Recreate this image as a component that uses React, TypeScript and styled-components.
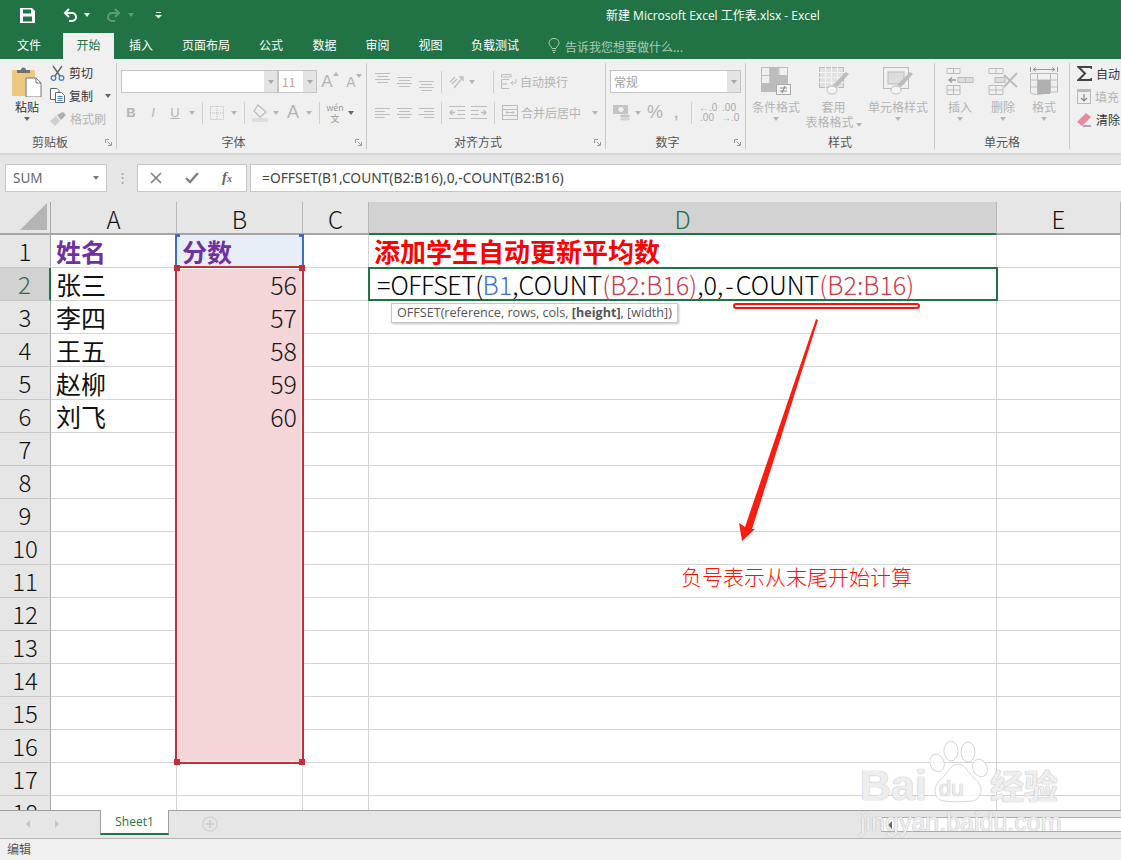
import React from "react";
import styled, { createGlobalStyle } from "styled-components";

const UI_FONT = `"Noto Sans CJK SC", "Noto Sans", sans-serif`;
const LATIN_FONT = `"Open Sans", "Noto Sans CJK SC", sans-serif`;
const GREEN = "#217346";
const DIM = "#b4b4b4";
const INK = "#444444";

const COLUMNS = [
  { name: "A", width: 126 },
  { name: "B", width: 126 },
  { name: "C", width: 66 },
  { name: "D", width: 628 },
  { name: "E", width: 124 },
];

const NAMES: Record<number, string> = { 2: "张三", 3: "李四", 4: "王五", 5: "赵柳", 6: "刘飞" };
const SCORES: Record<number, number> = { 2: 56, 3: 57, 4: 58, 5: 59, 6: 60 };
const TABS = [
  { label: "插入", width: 54 },
  { label: "页面布局", width: 76 },
  { label: "公式", width: 54 },
  { label: "数据", width: 53 },
  { label: "审阅", width: 53 },
  { label: "视图", width: 53 },
  { label: "负载测试", width: 76 },
];

export default function App() {
  return (
    <Window>
      <GlobalStyle />
      <TitleBar>
        <QuickAccess>
          <SaveIcon />
          <UndoIcon color="#ffffff" />
          <Caret $color="#ffffff" $gap={6} />
          <RedoIcon />
          <Caret $color="#5f9a7d" $gap={7} />
          <CustomizeIcon />
        </QuickAccess>
        <DocTitle>新建 Microsoft Excel 工作表.xlsx - Excel</DocTitle>
      </TitleBar>

      <TabRow>
        <Tab $width={58} $after={5}>文件</Tab>
        <Tab $width={51} $active>开始</Tab>
        {TABS.map((tab) => (
          <Tab key={tab.label} $width={tab.width}>{tab.label}</Tab>
        ))}
        <TellMe>
          <BulbIcon />
          告诉我您想要做什么...
        </TellMe>
      </TabRow>

      <Ribbon>
        <Group $width={117}>
          <ClipboardBody>
            <BigButton $width={40}>
              <BigIcon><PasteIcon /></BigIcon>
              <BigLabel $active>粘贴</BigLabel>
              <Caret $color="#666666" $top={3} />
            </BigButton>
            <SmallList>
              <SmallItem $active><ScissorsIcon />剪切</SmallItem>
              <SmallItem $active><CopyIcon />复制<Caret $color="#666666" $gap={8} /></SmallItem>
              <SmallItem><BrushIcon />格式刷</SmallItem>
            </SmallList>
          </ClipboardBody>
          <GroupLabel $launcher>剪贴板</GroupLabel>
          <Launcher />
        </Group>

        <Group $width={250}>
          <StackBody>
            <ToolRow>
              <Combo $width={157}><ComboArrow><Caret $color="#a8a8a8" /></ComboArrow></Combo>
              <Combo $width={39}>
                <ComboText $color="#c9a27a">11</ComboText>
                <ComboArrow><Caret $color="#a8a8a8" /></ComboArrow>
              </Combo>
              <GrowLetter $size={17}>A<Caret $color={DIM} $up /></GrowLetter>
              <GrowLetter $size={14}>A<Caret $color={DIM} /></GrowLetter>
            </ToolRow>
            <ToolRow $pad={3}>
              <Letter $bold $width={22}>B</Letter>
              <Letter $italic $width={22}>I</Letter>
              <Letter $underline $width={22}>U</Letter>
              <Caret $color={DIM} $gap={3} />
              <Divider $x={7} />
              <BorderIcon />
              <Caret $color={DIM} $gap={7} />
              <Divider $x={7} />
              <FillIcon />
              <Caret $color={DIM} $gap={4} />
              <Letter $size={18} $width={28}>A</Letter>
              <Caret $color={DIM} $gap={-1} />
              <Divider $x={7} />
              <WenLabel>wén<br />文</WenLabel>
              <Caret $color="#666666" $gap={3} />
            </ToolRow>
          </StackBody>
          <GroupLabel $launcher>字体</GroupLabel>
          <Launcher />
        </Group>

        <Group $width={239}>
          <StackBody>
            <ToolRow $pad={8} $gap={7}>
              <LinesIcon y={0} />
              <LinesIcon y={4} />
              <LinesIcon y={8} />
              <Divider $x={0} />
              <OrientIcon />
              <Caret $color={DIM} $gap={-3} />
              <Divider $x={11} $after={0} />
              <ToolText><WrapIcon />自动换行</ToolText>
            </ToolRow>
            <ToolRow $pad={8} $gap={7}>
              <LinesIcon y={4} align="left" />
              <LinesIcon y={4} align="center" />
              <LinesIcon y={4} align="right" />
              <Divider $x={0} />
              <IndentIcon />
              <IndentIcon flip />
              <Divider $x={0} />
              <ToolText><MergeIcon />合并后居中<Caret $color={DIM} $gap={8} /></ToolText>
            </ToolRow>
          </StackBody>
          <GroupLabel $launcher>对齐方式</GroupLabel>
          <Launcher />
        </Group>

        <Group $width={140}>
          <StackBody>
            <ToolRow $pad={4}>
              <Combo $width={131}>
                <ComboText $color="#a0a0a0">常规</ComboText>
                <ComboArrow><Caret $color="#a8a8a8" /></ComboArrow>
              </Combo>
            </ToolRow>
            <ToolRow $pad={7}>
              <CurrencyIcon />
              <Caret $color={DIM} $gap={4} />
              <Letter $size={18} $width={28}>%</Letter>
              <Letter $bold $size={15} $width={14}>,</Letter>
              <Divider $x={8} $after={7} />
              <DecimalIcon top="←.0" bottom=".00" />
              <DecimalIcon top=".00" bottom="→.0" />
            </ToolRow>
          </StackBody>
          <GroupLabel $launcher>数字</GroupLabel>
          <Launcher />
        </Group>

        <Group $width={189}>
          <RowBody>
            <BigButton $width={60}>
              <BigIcon><CondFormatIcon /></BigIcon>
              <BigLabel>条件格式</BigLabel>
              <Caret $color={DIM} $top={3} />
            </BigButton>
            <BigButton $width={55}>
              <BigIcon><TableFormatIcon /></BigIcon>
              <BigLabel>套用<br />表格格式<Caret $color={DIM} $gap={2} /></BigLabel>
            </BigButton>
            <BigButton $width={74}>
              <BigIcon><CellStyleIcon /></BigIcon>
              <BigLabel>单元格样式</BigLabel>
              <Caret $color={DIM} $top={3} />
            </BigButton>
          </RowBody>
          <GroupLabel>样式</GroupLabel>
        </Group>

        <Group $width={135}>
          <RowBody>
            <BigButton $width={50}>
              <BigIcon><InsertIcon /></BigIcon>
              <BigLabel>插入</BigLabel>
              <Caret $color={DIM} $top={3} />
            </BigButton>
            <BigButton $width={36}>
              <BigIcon><DeleteIcon /></BigIcon>
              <BigLabel>删除</BigLabel>
              <Caret $color={DIM} $top={3} />
            </BigButton>
            <BigButton $width={46}>
              <BigIcon><FormatIcon /></BigIcon>
              <BigLabel>格式</BigLabel>
              <Caret $color={DIM} $top={3} />
            </BigButton>
          </RowBody>
          <GroupLabel>单元格</GroupLabel>
        </Group>

        <EditGroup>
          <SmallItem $active><SigmaIcon />自动</SmallItem>
          <SmallItem><FillDownIcon />填充</SmallItem>
          <SmallItem $active><EraserIcon />清除</SmallItem>
        </EditGroup>
      </Ribbon>

      <FormulaBar>
        <NameBox>SUM<Caret $color="#777777" /></NameBox>
        <GripDots>⋮</GripDots>
        <FormulaButtons>
          <CancelIcon />
          <CheckIcon />
          <FxLabel>f<sub>x</sub></FxLabel>
        </FormulaButtons>
        <FormulaInput>=OFFSET(B1,COUNT(B2:B16),0,-COUNT(B2:B16)</FormulaInput>
      </FormulaBar>

      <Sheet>
        <SheetGrid>
          <CornerCell><svg width="27" height="27" viewBox="0 0 27 27"><path d="M0 27 L27 27 L27 0 Z" fill="#b5b5b5" /></svg></CornerCell>
          {COLUMNS.map((col) => (
            <ColumnHead key={col.name} $active={col.name === "D"}>{col.name}</ColumnHead>
          ))}
          {Array.from({ length: 18 }, (_, i) => i + 1).map((row) => (
            <React.Fragment key={row}>
              <RowHead $active={row === 2}>{row}</RowHead>
              <Cell $kind={row === 1 ? "title" : "name"}>{row === 1 ? "姓名" : NAMES[row]}</Cell>
              <Cell
                $kind={row === 1 ? "title" : "score"}
                $fill={row === 1 ? "#e8eef8" : row <= 16 ? "#f4d6d8" : undefined}
              >
                {row === 1 ? "分数" : SCORES[row]}
              </Cell>
              <Cell />
              {row === 1 ? <Cell $kind="heading">添加学生自动更新平均数</Cell> : <Cell />}
              <Cell />
            </React.Fragment>
          ))}
        </SheetGrid>

        <HeaderFrame>
          <TopHandle $side="left" />
          <TopHandle $side="right" />
        </HeaderFrame>
        <RangeFrame>
          <RangeHandle $x="left" $y="top" />
          <RangeHandle $x="right" $y="top" />
          <RangeHandle $x="left" $y="bottom" />
          <RangeHandle $x="right" $y="bottom" />
        </RangeFrame>

        <EditingCell>
          =<TightWord>OFFSET(</TightWord><RefBlue>B1</RefBlue>,COUNT<RefRed>(B2:B16)</RefRed>,0,<Dash>-</Dash>COUNT<RefRed>(B2:B16)</RefRed>
        </EditingCell>
        <Tooltip>OFFSET(reference, rows, cols, <strong>[height]</strong>, [width])</Tooltip>
        <RedUnderline />
        <ArrowDrawing viewBox="0 0 90 230" width="90" height="230">
          <path d="M79 2 L81 3 L15 212 L18 212 L5 224 L2 206 L8 210 Z" fill="#ff1a10" />
        </ArrowDrawing>
        <NoteText>负号表示从末尾开始计算</NoteText>
      </Sheet>

      <SheetTabs>
        <TabArrows>
          <NavArrow $dir="left" />
          <NavArrow $dir="right" />
        </TabArrows>
        <SheetTab>Sheet1</SheetTab>
        <AddSheet>
          <svg width="16" height="16" viewBox="0 0 16 16">
            <circle cx="8" cy="8" r="7.2" fill="none" stroke="#cfcfcf" strokeWidth="1.3" />
            <path d="M8 4 V12 M4 8 H12" stroke="#cfcfcf" strokeWidth="2" />
          </svg>
        </AddSheet>
        <ScrollTrack><NavArrow $dir="left" $dark /></ScrollTrack>
      </SheetTabs>

      <StatusBar>编辑</StatusBar>

      <Watermark>
        <PawDrawing viewBox="0 0 60 70" width="60" height="70">
          <g fill="rgba(255,255,255,0.8)" stroke="#d6d6d6" strokeWidth="1">
            <ellipse cx="21" cy="13" rx="7" ry="10" />
            <ellipse cx="38" cy="14" rx="7" ry="10" />
            <ellipse cx="7" cy="25" rx="7" ry="9" transform="rotate(-20 7 25)" />
            <ellipse cx="50" cy="30" rx="7" ry="9" transform="rotate(-25 50 30)" />
            <path d="M28 26 C36 26 38 36 46 42 C54 48 52 62 42 63 C34 64 22 64 14 63 C4 62 2 50 10 42 C18 36 20 26 28 26 Z" />
          </g>
        </PawDrawing>
        <WatermarkLine>
          <BaiText>Bai</BaiText>
          <DuText>du</DuText>
          <JingText>经验</JingText>
        </WatermarkLine>
        <UrlText>jingyan.baidu.com</UrlText>
      </Watermark>
    </Window>
  );
}

/* ---- icons ---- */

function SaveIcon() {
  return (
    <IconBox $left={20} $right={28}>
      <svg width="15" height="15" viewBox="0 0 15 15">
        <path fillRule="evenodd" fill="#fff" d="M0 0 H12 L15 3 V15 H0 Z M3 1.5 V5.5 H11 V1.5 Z M3 8.5 V13.5 H12 V8.5 Z" />
      </svg>
    </IconBox>
  );
}

function UndoIcon({ color }: { color: string }) {
  return (
    <svg width="15" height="14" viewBox="0 0 15 14" fill="none" stroke={color} strokeWidth="2">
      <path d="M2 5 H9 A4 4 0 0 1 9 13 H6" />
      <path d="M6 1 L2 5 L6 9" />
    </svg>
  );
}

function RedoIcon() {
  return (
    <IconBox $left={16}>
      <svg width="15" height="14" viewBox="0 0 15 14" fill="none" stroke="#5f9a7d" strokeWidth="2">
        <path d="M13 5 H6 A4 4 0 0 0 6 13 H9" />
        <path d="M9 1 L13 5 L9 9" />
      </svg>
    </IconBox>
  );
}

function CustomizeIcon() {
  return (
    <IconBox $left={21}>
      <svg width="7" height="7" viewBox="0 0 7 7">
        <path d="M1 .5 H6" stroke="#fff" strokeWidth="1" />
        <path d="M0 3 H7 L3.5 6.5 Z" fill="#fff" />
      </svg>
    </IconBox>
  );
}

function BulbIcon() {
  return (
    <svg width="12" height="16" viewBox="0 0 12 16" fill="none" stroke="#a9cbb8" strokeWidth="1">
      <path d="M4 10.5 C3.5 8.5 1 7.5 1 5 A5 4.6 0 0 1 11 5 C11 7.5 8.5 8.5 8 10.5 Z" />
      <path d="M4 12.5 H8 M5 14.5 H7" />
    </svg>
  );
}

function PasteIcon() {
  return (
    <svg width="30" height="30" viewBox="0 0 30 30">
      <rect x="0" y="3" width="23" height="26" rx="1" fill="#ecc880" />
      <path d="M5 6 V3 H9 A2.5 2.5 0 0 1 14 3 H18 V6 Z" fill="#6f6f6f" />
      <path d="M14 11 H24 L29 16 V30 H14 Z" fill="#fff" stroke="#777" strokeWidth="1" />
      <path d="M24 11 V16 H29" fill="none" stroke="#777" strokeWidth="1" />
    </svg>
  );
}

function ScissorsIcon() {
  return (
    <svg width="15" height="16" viewBox="0 0 15 16" fill="none">
      <path d="M3 1 L10 11 M12 1 L5 11" stroke="#666" strokeWidth="1.4" />
      <circle cx="3.5" cy="13" r="2.3" stroke="#3f7fc0" strokeWidth="1.3" />
      <circle cx="11.5" cy="13" r="2.3" stroke="#3f7fc0" strokeWidth="1.3" />
    </svg>
  );
}

function CopyIcon() {
  return (
    <svg width="15" height="15" viewBox="0 0 15 15" fill="#fff" stroke="#666" strokeWidth="1">
      <path d="M.5 .5 H7 L9 2.5 V11.5 H.5 Z" />
      <path d="M5.5 4.5 H11.5 L14.5 7.5 V14.5 H5.5 Z" />
      <path d="M7.5 8.5 H12.5 M7.5 10.5 H12.5 M7.5 12.5 H12.5" stroke="#3f7fc0" />
    </svg>
  );
}

function BrushIcon() {
  return (
    <svg width="16" height="14" viewBox="0 0 16 14">
      <path d="M0 9 L6 4 L10 9 L5 14 Z" fill="#cfcfcf" />
      <path d="M7 3 L11 8 L16 3 L13 0 Z" fill="#adadad" />
    </svg>
  );
}

function Launcher() {
  return (
    <LauncherBox>
      <svg width="7" height="7" viewBox="0 0 7 7" fill="none" stroke="#9a9a9a">
        <path d="M6.5 3 V6.5 H3 M.5 .5 H4 M.5 .5 V4 M2.5 2.5 L6 6" />
      </svg>
    </LauncherBox>
  );
}

function BorderIcon() {
  return (
    <svg width="14" height="14" viewBox="0 0 14 14" fill="none" stroke="#bdbdbd" strokeDasharray="1 1">
      <rect x=".5" y=".5" width="13" height="13" />
      <path d="M7 0 V14 M0 7 H14" />
    </svg>
  );
}

function FillIcon() {
  return (
    <svg width="17" height="18" viewBox="0 0 17 18">
      <path d="M6 1 L14 8 L8 13 L2 7 Z" fill="none" stroke="#bdbdbd" strokeWidth="1.3" />
      <rect x="0" y="14" width="16" height="4" fill="#dedede" />
    </svg>
  );
}

function LinesIcon({ y, align = "center" }: { y: number; align?: "left" | "center" | "right" }) {
  const mid = align === "left" ? "M0 H10" : align === "right" ? "M5 H15" : "M2 H13";
  const [start, end] = mid.split(" ");
  return (
    <svg width="15" height="18" viewBox="0 0 15 18" stroke="#bdbdbd">
      <path d={`M0 ${y + 0.5} H15 ${start} ${y + 3.5} ${end} M0 ${y + 6.5} H15 ${start} ${y + 9.5} ${end}`} />
    </svg>
  );
}

function OrientIcon() {
  return (
    <svg width="16" height="15" viewBox="0 0 16 15" fill="none" stroke="#bdbdbd" strokeWidth="1.3">
      <path d="M1 8 L6 3 M3 10 L8 5 M5 14 L14 3 M10 3 H14 V7" />
    </svg>
  );
}

function WrapIcon() {
  return (
    <svg width="16" height="15" viewBox="0 0 16 15" fill="none" stroke="#bdbdbd">
      <path d="M.5 .5 H10 V3 H.5 Z M.5 5.5 H8 M.5 5.5 V14.5 H8 M.5 10 H6" />
      <path d="M15 5 V9 H10 M12 7 L10 9 L12 11" />
    </svg>
  );
}

function IndentIcon({ flip }: { flip?: boolean }) {
  return (
    <FlipSvg $flip={flip} width="16" height="13" viewBox="0 0 16 13" fill="none" stroke="#bdbdbd">
      <path d="M0 .5 H16 M8 4.5 H16 M8 8.5 H16 M0 12.5 H16" />
      <path d="M1 6.5 H6 M3.5 4 L1 6.5 L3.5 9" strokeWidth="1.3" />
    </FlipSvg>
  );
}

function MergeIcon() {
  return (
    <svg width="16" height="15" viewBox="0 0 16 15" fill="none" stroke="#bdbdbd">
      <rect x=".5" y=".5" width="15" height="14" />
      <path d="M0 4.5 H16 M0 10.5 H16 M4 7.5 H12 M5.5 6 L4 7.5 L5.5 9 M10.5 6 L12 7.5 L10.5 9" />
    </svg>
  );
}

function CurrencyIcon() {
  return (
    <svg width="18" height="16" viewBox="0 0 18 16">
      <rect x="0" y="0" width="15" height="9" fill="#c4c4c4" />
      <circle cx="8" cy="4.5" r="2.5" fill="#f0f0f0" />
      <ellipse cx="12" cy="11" rx="5" ry="1.6" fill="#c4c4c4" />
      <ellipse cx="12" cy="14" rx="5" ry="1.6" fill="#d4d4d4" />
    </svg>
  );
}

function DecimalIcon({ top, bottom }: { top: string; bottom: string }) {
  return <DecimalBox>{top}<br />{bottom}</DecimalBox>;
}

const TileStroke = { fill: "none", stroke: "#bcbcbc" };

function CondFormatIcon() {
  return (
    <svg width="30" height="28" viewBox="0 0 30 28" {...TileStroke}>
      <rect x=".5" y=".5" width="26" height="24" />
      <path d="M9 0 V25 M18 0 V25 M0 8.5 H27 M0 16.5 H27" />
      <rect x="9" y="1" width="8" height="7" fill="#bcbcbc" />
      <rect x="9" y="9" width="17" height="7" fill="#bcbcbc" />
      <rect x="1" y="17" width="16" height="7" fill="#bcbcbc" />
      <rect x="15.5" y="17.5" width="14" height="10" fill="#f4f4f4" stroke="#aaa" />
      <path d="M19 21 H26 M19 24 H26 M24 19 L21 26" stroke="#888" />
    </svg>
  );
}

function TableFormatIcon() {
  return (
    <svg width="30" height="28" viewBox="0 0 30 28" {...TileStroke}>
      <rect x=".5" y=".5" width="24" height="20" fill="#e2e2e2" />
      <path d="M6.5 0 V21 M12.5 0 V21 M18.5 0 V21 M0 5.5 H25 M0 10.5 H25 M0 15.5 H25" stroke="#f4f4f4" />
      <path d="M30 7 L18 20 L14 18 L27 5 Z" fill="#bcbcbc" stroke="none" />
      <ellipse cx="13" cy="23" rx="5" ry="4" fill="#f4f4f4" />
    </svg>
  );
}

function CellStyleIcon() {
  return (
    <svg width="30" height="28" viewBox="0 0 30 28" {...TileStroke}>
      <rect x=".5" y=".5" width="25" height="21" />
      <rect x="5" y="5" width="16" height="12" fill="#dddddd" />
      <path d="M30 7 L18 20 L14 18 L27 5 Z" fill="#bcbcbc" stroke="none" />
      <ellipse cx="13" cy="23" rx="5" ry="4" fill="#f4f4f4" />
    </svg>
  );
}

function InsertIcon() {
  return (
    <svg width="28" height="28" viewBox="0 0 28 28" {...TileStroke}>
      <path d="M1 1.5 H14 V6.5 H1 Z M7.5 1 V7 M1 18.5 H14 V27.5 H1 Z M1 23 H14 M7.5 18 V28" />
      <rect x="12" y="10.5" width="15" height="5" fill="#dedede" />
      <path d="M19.5 10 V16" />
      <path d="M3 13 H10 M6 10.5 L3 13 L6 15.5" stroke="#9c9c9c" strokeWidth="1.3" />
    </svg>
  );
}

function DeleteIcon() {
  return (
    <svg width="30" height="28" viewBox="0 0 30 28" {...TileStroke}>
      <path d="M1 1.5 H15 V6.5 H1 Z M8 1 V7 M1 18.5 H15 V27.5 H1 Z M1 23 H15 M8 18 V28" />
      <rect x="7" y="10.5" width="10" height="5" fill="#dedede" />
      <path d="M16 8 L29 20 M29 6 L16 20" stroke="#bcbcbc" strokeWidth="2" />
    </svg>
  );
}

function FormatIcon() {
  return (
    <svg width="28" height="30" viewBox="0 0 28 30" {...TileStroke}>
      <path d="M.5 0 V5 M27.5 0 V5 M3 2.5 H25 M6 .5 L3 2.5 L6 4.5 M22 .5 L25 2.5 L22 4.5" stroke="#999" />
      <path d="M.5 6.5 H27.5 V25 C20 24 8 30 .5 26 Z" />
      <path d="M7.5 6 V27 M20.5 6 V26 M0 13 H28 M0 20 H28" />
      <rect x="8" y="13" width="12" height="14" fill="#b0b0b0" stroke="none" />
    </svg>
  );
}

function SigmaIcon() {
  return (
    <svg width="15" height="15" viewBox="0 0 15 15" fill="none" stroke="#444" strokeWidth="2">
      <path d="M14.5 3 V1 H1.5 L8 7.5 L1.5 14 H14.5 V12" />
    </svg>
  );
}

function FillDownIcon() {
  return (
    <svg width="14" height="15" viewBox="0 0 14 15" fill="none">
      <rect x=".5" y=".5" width="13" height="14" stroke="#bbb" />
      <rect x="0" y="0" width="14" height="3" fill="#bbb" />
      <path d="M7 5 V12 M4 9 L7 12 L10 9" stroke="#888" strokeWidth="1.2" />
    </svg>
  );
}

function EraserIcon() {
  return (
    <svg width="15" height="14" viewBox="0 0 15 14">
      <path d="M0 9 L9 0 L14 4 L5 13 Z" fill="#e8889c" />
      <path d="M6 13 H14" stroke="#666" />
    </svg>
  );
}

function CancelIcon() {
  return (
    <svg width="12" height="12" viewBox="0 0 12 12" stroke="#808080" strokeWidth="1.6">
      <path d="M1 1 L11 11 M11 1 L1 11" />
    </svg>
  );
}

function CheckIcon() {
  return (
    <svg width="14" height="12" viewBox="0 0 14 12" fill="none" stroke="#808080" strokeWidth="2.4">
      <path d="M1 6 L5 10 L13 1" />
    </svg>
  );
}

/* ---- styles ---- */

const GlobalStyle = createGlobalStyle`
  html, body {
    margin: 0;
    padding: 0;
    background: #ffffff;
  }
`;

const Window = styled.div`
  position: relative;
  width: 1121px;
  height: 860px;
  overflow: hidden;
  display: flex;
  flex-direction: column;
  font-family: ${UI_FONT};
  font-size: 12px;
`;

const TitleBar = styled.div`
  height: 33px;
  flex: none;
  box-sizing: border-box;
  padding-bottom: 3px;
  display: flex;
  align-items: center;
  background: ${GREEN};
`;

const QuickAccess = styled.div`
  width: 606px;
  display: flex;
  align-items: center;
`;

const IconBox = styled.span<{ $left?: number; $right?: number }>`
  display: inline-flex;
  margin-left: ${(p) => p.$left ?? 0}px;
  margin-right: ${(p) => p.$right ?? 0}px;
`;

const FlipSvg = styled.svg<{ $flip?: boolean }>`
  flex: none;
  margin-left: ${(p) => (p.$flip ? -1 : 0)}px;
  transform: ${(p) => (p.$flip ? "scaleX(-1)" : "none")};
`;

const DocTitle = styled.div`
  font-family: ${LATIN_FONT};
  color: #ffffff;
  font-size: 12px;
  white-space: nowrap;
`;

const Caret = styled.span<{ $color: string; $gap?: number; $top?: number; $up?: boolean }>`
  display: inline-block;
  width: 0;
  height: 0;
  flex: none;
  margin-left: ${(p) => p.$gap ?? 0}px;
  margin-top: ${(p) => p.$top ?? 0}px;
  border-left: 3.5px solid transparent;
  border-right: 3.5px solid transparent;
  ${(p) => (p.$up ? `border-bottom: 4px solid ${p.$color};` : `border-top: 4px solid ${p.$color};`)}
`;

const TabRow = styled.div`
  height: 26px;
  flex: none;
  display: flex;
  background: ${GREEN};
`;

const Tab = styled.div<{ $width: number; $after?: number; $active?: boolean }>`
  width: ${(p) => p.$width}px;
  margin-right: ${(p) => p.$after ?? 0}px;
  flex: none;
  text-align: center;
  line-height: 24px;
  color: ${(p) => (p.$active ? GREEN : "#ffffff")};
  background: ${(p) => (p.$active ? "#f0f0f0" : "transparent")};
`;

const TellMe = styled.div`
  margin-left: 15px;
  display: flex;
  align-items: center;
  gap: 5px;
  color: #a9cbb8;
  height: 26px;
`;

const Ribbon = styled.div`
  height: 94px;
  flex: none;
  display: flex;
  background: #f0f0f0;
  color: ${INK};
  border-bottom: 2px solid #d6d6d6;
`;

const Group = styled.div<{ $width: number }>`
  position: relative;
  width: ${(p) => p.$width}px;
  flex: none;
  box-sizing: border-box;
  display: flex;
  flex-direction: column;
  margin: 4px 0;
  border-right: 1px solid #c9c9c9;
`;

const GroupLabel = styled.div<{ $launcher?: boolean }>`
  height: 14px;
  padding-right: ${(p) => (p.$launcher ? 16 : 0)}px;
  line-height: 14px;
  text-align: center;
  color: #555555;
`;

const LauncherBox = styled.span`
  position: absolute;
  right: 4px;
  bottom: 3px;
  display: inline-flex;
`;

const ClipboardBody = styled.div`
  flex: 0 0 72px;
  display: flex;
  padding-left: 7px;
`;

const StackBody = styled.div`
  flex: 0 0 72px;
  box-sizing: border-box;
  display: flex;
  flex-direction: column;
  gap: 8px;
  padding-top: 7px;
`;

const RowBody = styled.div`
  flex: 0 0 72px;
  display: flex;
`;

const BigButton = styled.div<{ $width: number }>`
  width: ${(p) => p.$width}px;
  flex: none;
  display: flex;
  flex-direction: column;
  align-items: center;
  padding-top: 4px;
`;

const BigIcon = styled.div`
  height: 30px;
  display: flex;
  align-items: flex-start;
`;

const BigLabel = styled.div<{ $active?: boolean }>`
  margin-top: 2px;
  color: ${(p) => (p.$active ? "#333333" : DIM)};
  line-height: 15px;
  text-align: center;
  white-space: nowrap;
`;

const SmallList = styled.div`
  margin: -2px 0 0 3px;
  display: flex;
  flex-direction: column;
`;

const SmallItem = styled.div<{ $active?: boolean }>`
  height: 23px;
  flex: none;
  display: flex;
  align-items: center;
  gap: 4px;
  color: ${(p) => (p.$active ? "#333333" : DIM)};
  white-space: nowrap;
`;

const ToolRow = styled.div<{ $gap?: number; $pad?: number }>`
  height: 23px;
  display: flex;
  align-items: center;
  gap: ${(p) => p.$gap ?? 0}px;
  padding-left: ${(p) => p.$pad ?? 4}px;
`;

const Combo = styled.div<{ $width: number }>`
  width: ${(p) => p.$width}px;
  height: 23px;
  box-sizing: border-box;
  flex: none;
  display: flex;
  justify-content: space-between;
  background: #ffffff;
  border: 1px solid #c4c4c4;
`;

const ComboText = styled.span<{ $color: string }>`
  padding-left: 3px;
  line-height: 21px;
  color: ${(p) => p.$color};
`;

const ComboArrow = styled.span`
  width: 13px;
  margin-left: auto;
  display: flex;
  align-items: center;
  justify-content: center;
  background: #e4e4e4;
`;

const GrowLetter = styled.span<{ $size: number }>`
  width: 22px;
  margin-left: 2px;
  display: inline-flex;
  align-items: flex-start;
  justify-content: center;
  font-family: "Liberation Sans", sans-serif;
  font-size: ${(p) => p.$size}px;
  color: ${DIM};
`;

const Letter = styled.span<{ $bold?: boolean; $italic?: boolean; $underline?: boolean; $size?: number; $width: number }>`
  width: ${(p) => p.$width}px;
  flex: none;
  text-align: center;
  font-family: "Liberation Sans", sans-serif;
  font-size: ${(p) => p.$size ?? 13}px;
  font-weight: ${(p) => (p.$bold ? 700 : 400)};
  font-style: ${(p) => (p.$italic ? "italic" : "normal")};
  text-decoration: ${(p) => (p.$underline ? "underline" : "none")};
  color: ${DIM};
`;

const Divider = styled.span<{ $x: number; $after?: number }>`
  width: 1px;
  height: 22px;
  flex: none;
  margin: 0 ${(p) => p.$after ?? p.$x}px 0 ${(p) => p.$x}px;
  background: #cfcfcf;
`;

const WenLabel = styled.span`
  width: 20px;
  flex: none;
  margin-left: -2px;
  text-align: center;
  font-size: 9px;
  line-height: 11px;
  color: #999999;
`;

const ToolText = styled.span`
  display: inline-flex;
  align-items: center;
  gap: 3px;
  color: ${DIM};
  white-space: nowrap;
`;

const DecimalBox = styled.span`
  width: 16px;
  margin-right: 6px;
  font-family: "Liberation Sans", sans-serif;
  font-size: 10px;
  line-height: 10px;
  text-align: center;
  color: #a8a8a8;
  white-space: nowrap;
`;

const EditGroup = styled.div`
  flex: 1;
  padding: 3px 0 0 7px;
  display: flex;
  flex-direction: column;
`;

const FormulaBar = styled.div`
  height: 47px;
  flex: none;
  box-sizing: border-box;
  display: flex;
  align-items: flex-start;
  padding: 9px 0 0 5px;
  background: #e6e6e6;
`;

const NameBox = styled.div`
  width: 102px;
  height: 28px;
  box-sizing: border-box;
  display: flex;
  align-items: center;
  justify-content: space-between;
  padding: 0 7px;
  background: #ffffff;
  border: 1px solid #c6c6c6;
  font-family: "Noto Sans", sans-serif;
  font-size: 13.5px;
  color: #666666;
`;

const GripDots = styled.div`
  width: 30px;
  line-height: 26px;
  text-align: center;
  color: #a0a0a0;
  font-size: 13px;
`;

const FormulaButtons = styled.div`
  width: 110px;
  height: 28px;
  box-sizing: border-box;
  display: flex;
  align-items: center;
  gap: 23px;
  padding-left: 12px;
  background: #ffffff;
  border: 1px solid #c6c6c6;
`;

const FxLabel = styled.span`
  font-family: "Liberation Serif", serif;
  font-style: italic;
  font-weight: 700;
  font-size: 15px;
  line-height: 14px;
  color: #666666;

  sub {
    font-size: 10px;
    vertical-align: baseline;
  }
`;

const FormulaInput = styled.div`
  flex: 1;
  margin-left: 3px;
  height: 28px;
  box-sizing: border-box;
  padding-left: 11px;
  line-height: 26px;
  background: #ffffff;
  border: 1px solid #c6c6c6;
  border-right: 0;
  font-family: "Noto Sans", sans-serif;
  font-size: 13.8px;
  color: #444444;
  white-space: nowrap;
`;

const Sheet = styled.div`
  position: relative;
  height: 608px;
  flex: none;
  overflow: hidden;
  background: #ffffff;
`;

const SheetGrid = styled.div`
  display: grid;
  grid-template-columns: 51px ${COLUMNS.map((c) => `${c.width}px`).join(" ")};
  grid-auto-rows: 33px;
  font-family: "Noto Sans CJK SC", sans-serif;
`;

const CornerCell = styled.div`
  display: flex;
  align-items: flex-end;
  justify-content: flex-end;
  padding: 0 3px 3px 0;
  box-sizing: border-box;
  background: #e6e6e6;
  border-right: 1px solid #a8a8a8;
  border-bottom: 2px solid #a6a6a6;
`;

const ColumnHead = styled.div<{ $active?: boolean }>`
  box-sizing: border-box;
  text-align: center;
  font-size: 24px;
  font-weight: 300;
  line-height: 33px;
  color: ${(p) => (p.$active ? GREEN : "#111111")};
  background: ${(p) => (p.$active ? "#d2d2d2" : "#e6e6e6")};
  border-right: 1px solid #b8b8b8;
  border-bottom: 2px solid ${(p) => (p.$active ? GREEN : "#a6a6a6")};
`;

const RowHead = styled.div<{ $active?: boolean }>`
  box-sizing: border-box;
  text-align: center;
  font-size: 24px;
  font-weight: 300;
  line-height: 32px;
  color: ${(p) => (p.$active ? GREEN : "#111111")};
  background: ${(p) => (p.$active ? "#d2d2d2" : "#e6e6e6")};
  border-right: ${(p) => (p.$active ? `2px solid ${GREEN}` : "1px solid #a8a8a8")};
  border-bottom: 1px solid #c8c8c8;
`;

const Cell = styled.div<{ $kind?: "title" | "name" | "score" | "heading"; $fill?: string }>`
  box-sizing: border-box;
  min-width: 0;
  padding: 0 5px;
  line-height: 32px;
  white-space: nowrap;
  font-size: 25px;
  background: ${(p) => p.$fill ?? "#ffffff"};
  border-right: 1px solid ${(p) => p.$fill ?? "#d4d4d4"};
  border-bottom: 1px solid ${(p) => p.$fill ?? "#d4d4d4"};
  color: ${(p) => (p.$kind === "title" ? "#7030a0" : p.$kind === "heading" ? "#ff0000" : "#111111")};
  font-weight: ${(p) => (p.$kind === "title" || p.$kind === "heading" ? 700 : 400)};
  text-align: ${(p) => (p.$kind === "score" ? "right" : "left")};
  ${(p) => (p.$kind === "score" ? "font-weight: 300; color: #20181a;" : "")}
  ${(p) => (p.$kind === "heading" ? "font-size: 26px;" : "")}
`;

const HeaderFrame = styled.div`
  position: absolute;
  left: 175px;
  top: 33px;
  width: 129px;
  height: 32px;
  box-sizing: border-box;
  border-left: 2px solid #3a6fc4;
  border-right: 2px solid #3a6fc4;
`;

const TopHandle = styled.span<{ $side: "left" | "right" }>`
  position: absolute;
  top: -1px;
  ${(p) => p.$side}: -2px;
  width: 5px;
  height: 3px;
  background: #3a6fc4;
`;

const RangeFrame = styled.div`
  position: absolute;
  left: 175px;
  top: 64px;
  width: 129px;
  height: 498px;
  box-sizing: border-box;
  border: 2px solid #c0303c;
  box-shadow: inset 0 0 0 1px #ffffff;
`;

const RangeHandle = styled.span<{ $x: "left" | "right"; $y: "top" | "bottom" }>`
  position: absolute;
  ${(p) => p.$x}: -3px;
  ${(p) => p.$y}: -3px;
  width: 6px;
  height: 6px;
  background: #c0303c;
`;

const EditingCell = styled.div`
  position: absolute;
  left: 368px;
  top: 65px;
  width: 630px;
  height: 34px;
  box-sizing: border-box;
  padding-left: 7px;
  background: #ffffff;
  border: 2px solid ${GREEN};
  font-family: "Noto Sans CJK SC", sans-serif;
  font-weight: 300;
  font-size: 25.2px;
  line-height: 30px;
  color: #000000;
  white-space: nowrap;
`;

const TightWord = styled.span`
  letter-spacing: -0.6px;
`;

const Dash = styled.span`
  padding: 0 2px;
`;

const RefBlue = styled.span`
  color: #3f6fd0;
`;

const RefRed = styled.span`
  color: #c83c48;
`;

const Tooltip = styled.div`
  position: absolute;
  left: 391px;
  top: 101px;
  height: 20px;
  box-sizing: border-box;
  padding: 0 5px;
  background: #ffffff;
  border: 1px solid #c8c8c8;
  box-shadow: 1px 1px 2px rgba(0, 0, 0, 0.25);
  font-family: ${LATIN_FONT};
  font-size: 12.6px;
  line-height: 18px;
  color: #555555;
  white-space: nowrap;
`;

const RedUnderline = styled.div`
  position: absolute;
  left: 733px;
  top: 101px;
  width: 187px;
  height: 6px;
  box-sizing: border-box;
  background: #ffecec;
  border: 2px solid #f01810;
  border-radius: 3px;
`;

const ArrowDrawing = styled.svg`
  position: absolute;
  left: 737px;
  top: 115px;
`;

const NoteText = styled.div`
  position: absolute;
  left: 681px;
  top: 358px;
  font-family: "Noto Sans CJK SC", sans-serif;
  font-weight: 300;
  font-size: 21px;
  line-height: 32px;
  color: #ff1000;
  white-space: nowrap;
`;

const SheetTabs = styled.div`
  height: 28px;
  flex: none;
  box-sizing: border-box;
  display: flex;
  align-items: flex-start;
  background: #e6e6e6;
  border-top: 1px solid #a0a0a0;
`;

const TabArrows = styled.div`
  width: 100px;
  height: 26px;
  display: flex;
  align-items: center;
  gap: 25px;
  padding-left: 26px;
  box-sizing: border-box;
`;

const NavArrow = styled.span<{ $dir: "left" | "right"; $dark?: boolean }>`
  width: 0;
  height: 0;
  border-top: 4px solid transparent;
  border-bottom: 4px solid transparent;
  ${(p) => (p.$dir === "left" ? "border-right" : "border-left")}: 4px solid ${(p) => (p.$dark ? "#666666" : "#c4c4c4")};
`;

const SheetTab = styled.div`
  width: 69px;
  height: 25px;
  flex: none;
  box-sizing: border-box;
  margin-top: -1px;
  text-align: center;
  line-height: 24px;
  font-family: ${LATIN_FONT};
  color: ${GREEN};
  background: #ffffff;
  border-left: 1px solid #a0a0a0;
  border-right: 1px solid #a0a0a0;
  border-bottom: 2px solid ${GREEN};
`;

const AddSheet = styled.div`
  margin: 5px 0 0 33px;
  display: flex;
`;

const ScrollTrack = styled.div`
  margin: 6px 0 0 auto;
  width: 240px;
  height: 15px;
  box-sizing: border-box;
  display: flex;
  align-items: center;
  padding-left: 6px;
  background: #ffffff;
  border: 1px solid #ababab;
  border-right: 0;
`;

const StatusBar = styled.div`
  flex: 1;
  box-sizing: border-box;
  padding-left: 7px;
  line-height: 20px;
  color: #555555;
  background: #f0f0f0;
  border-top: 1px solid #b4b4b4;
`;

const Watermark = styled.div`
  position: absolute;
  left: 860px;
  top: 738px;
  width: 205px;
  height: 100px;
  pointer-events: none;
`;

const PawDrawing = styled.svg`
  position: absolute;
  left: 70px;
  top: 0;
`;

const outlined = `
  color: rgba(255, 255, 255, 0.8);
  text-shadow: 0 0 1px #b4b4b4, 0 0 1px #b4b4b4;
`;

const WatermarkLine = styled.div`
  position: absolute;
  left: 0;
  top: 22px;
  width: 205px;
  height: 50px;
  display: flex;
  align-items: center;
`;

const BaiText = styled.span`
  ${outlined}
  width: 79px;
  font-family: "Liberation Sans", sans-serif;
  font-weight: 700;
  font-size: 43px;
`;

const DuText = styled.span`
  ${outlined}
  width: 51px;
  margin-top: 8px;
  font-family: "Liberation Sans", sans-serif;
  font-size: 22px;
`;

const JingText = styled.span`
  ${outlined}
  font-family: "Noto Sans CJK SC", sans-serif;
  font-weight: 700;
  font-size: 34px;
  line-height: 40px;
`;

const UrlText = styled.div`
  ${outlined}
  position: absolute;
  left: 0;
  top: 68px;
  font-family: "Liberation Sans", sans-serif;
  font-size: 25px;
  line-height: 32px;
  white-space: nowrap;
`;
